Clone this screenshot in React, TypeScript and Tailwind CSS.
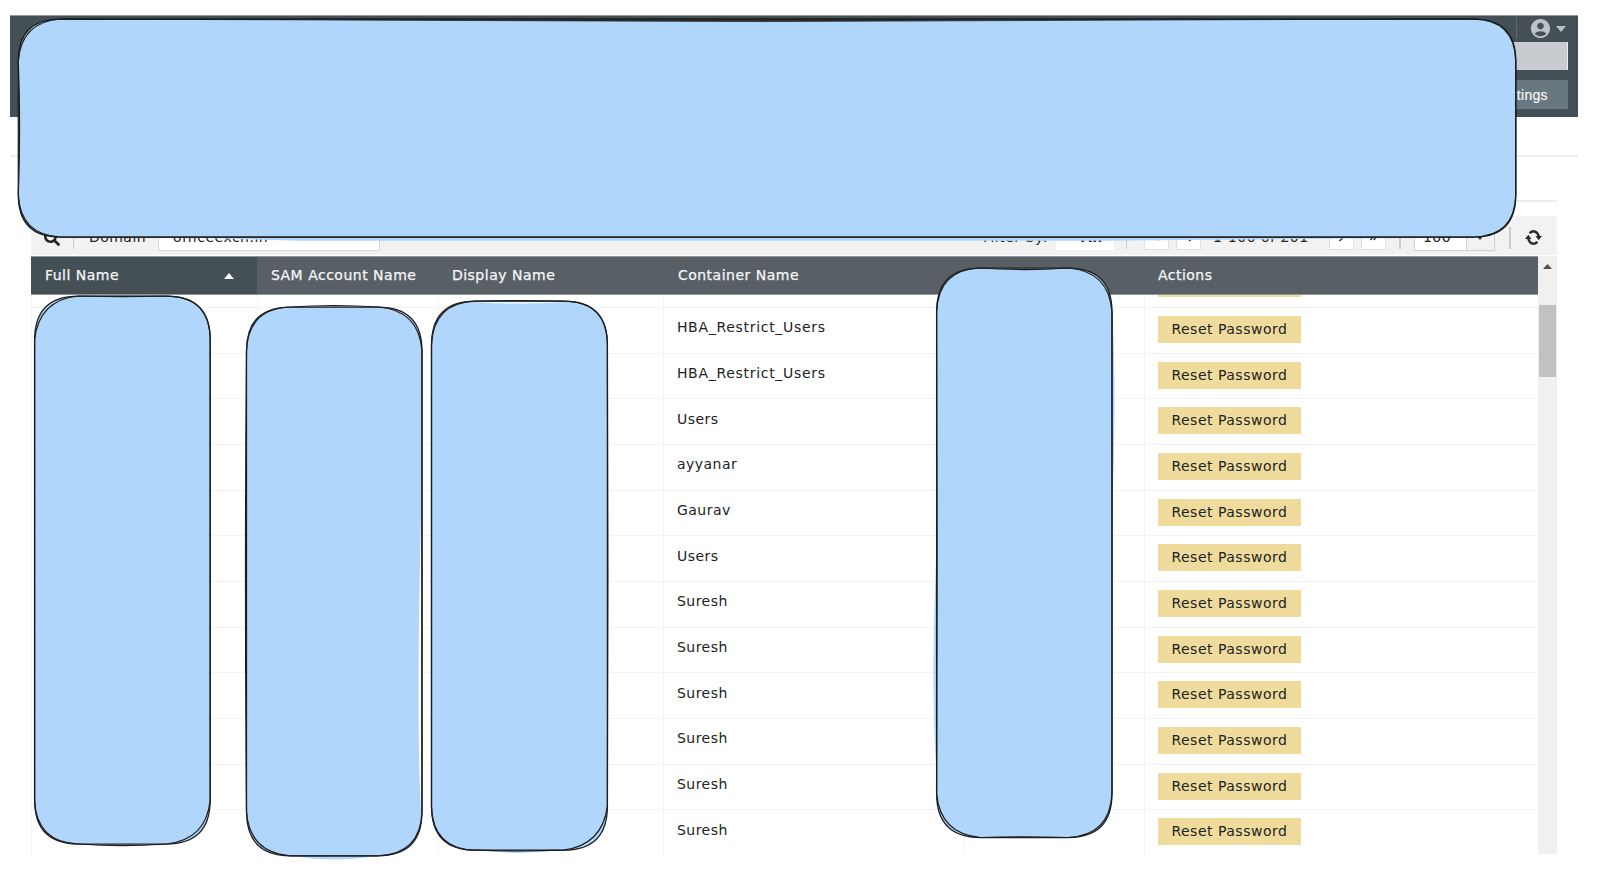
import { MdAccountCircle } from "react-icons/md";
import { FaSearch, FaChevronLeft, FaChevronRight, FaAngleDoubleLeft, FaAngleDoubleRight } from "react-icons/fa";

const containers = [
  "", "HBA_Restrict_Users", "HBA_Restrict_Users", "Users", "ayyanar", "Gaurav", "Users",
  "Suresh", "Suresh", "Suresh", "Suresh", "Suresh", "Suresh",
];

const columns = "grid grid-cols-[226px_181px_225px_301px_180px_1fr]";

// corners: inward shift of each corner's control point (tl, tr, br, bl)
// sides: outward bow of each side (top, right, bottom, left)
type Box = { x: number; y: number; r: number; b: number; c: number; corners: number[]; sides: number[] };

const masks: Box[] = [
  { x: 18.3, y: 19, r: 1515.8, b: 237, c: 42, corners: [3, 1, 1, 2], sides: [0, 0, 0, -2.5] },
  { x: 34.6, y: 296, r: 210.2, b: 844, c: 44, corners: [4, 0, 4, 1.5], sides: [-1, 0, 3, 0] },
  { x: 246.5, y: 307, r: 422, b: 855.8, c: 44, corners: [1.5, 3, 1.5, 3], sides: [3, 0, 0, 2] },
  { x: 431.5, y: 301.2, r: 607.4, b: 850.2, c: 44, corners: [1.5, 0, 5, 1], sides: [1, 1, 1.5, 0] },
  { x: 936.6, y: 268, r: 1112, b: 837.5, c: 44, corners: [1.5, 3, 2, 3.5], sides: [-3, 0, -1.5, -1] },
];

function outline({ x, y, r, b, c }: Box, [tl, tr, br, bl] = [0, 0, 0, 0], [t, rt, bt, lt] = [0, 0, 0, 0]) {
  const mx = (x + r) / 2;
  const my = (y + b) / 2;
  return `M${x + c} ${y}Q${mx} ${y - t} ${r - c} ${y}Q${r - tr} ${y + tr} ${r} ${y + c}Q${r + rt} ${my} ${r} ${b - c}Q${r - br} ${b - br} ${r - c} ${b}Q${mx} ${b + bt} ${x + c} ${b}Q${x + bl} ${b - bl} ${x} ${b - c}Q${x - lt} ${my} ${x} ${y + c}Q${x + tl} ${y + tl} ${x + c} ${y}Z`;
}

function Masks() {
  return (
    <svg className="pointer-events-none absolute inset-0" width="1623" height="873" fill="none">
      <path d="M130 236L300 240.700H1100L1400 238V236ZM290 855Q334 864 380 855ZM480 850Q520 856 556 850ZM1112 310Q1117 380 1112 520ZM937 540Q930 690 937 780ZM246 400Q244 620 247 760Z" fill="#b0d6fb" />
      {masks.map((m, i) => (
        <g key={i} stroke="#1e1e1e" strokeWidth="1.25">
          <path d={outline(m)} fill="#b0d6fb" />
          <path d={outline(m, m.corners, m.sides)} />
        </g>
      ))}
      <path d="M60 19L1040 19.500 1478 18.800 760 21.600Z" fill="#2b3033" stroke="#1e1e1e" strokeWidth=".7" />
      <path d="M421 520Q416 720 421 812Z" fill="#fff" />
      <path d="M475 302.200Q520 305 565 302.200Z" fill="#fff" />
    </svg>
  );
}

const pageButton = "flex h-[25px] w-[25px] items-center justify-center border border-[#e0e0e0] bg-white text-[9px]";

function Toolbar() {
  return (
    <div className="flex h-[39px] items-center bg-[#f2f2f2] pt-[4px] text-[14px] tracking-[0.5px] text-[#222]">
      <FaSearch className="ml-[13px] h-4 w-4" />
      <span className="ml-[13px] h-[22px] w-px bg-[#ccc]" />
      <span className="ml-[15px] w-[57px]">Domain</span>
      <div className="ml-[12px] flex h-[27px] w-[222px] items-center justify-between border border-[#d8d8d8] bg-white px-[14px]">
        <span>officeexch.in</span>
      </div>
      <span className="ml-[603px] whitespace-nowrap">Filter by:</span>
      <span className="ml-[8px] flex h-[25px] w-[58px] items-center gap-3 bg-white px-[11px] font-bold">
        <FaChevronLeft className="h-2 w-2" />All
      </span>
      <span className="ml-[12px] h-[22px] w-px bg-[#ccc]" />
      <span className={`ml-[17px] ${pageButton}`}><FaAngleDoubleLeft /></span>
      <span className={`ml-[7px] ${pageButton}`}><FaChevronLeft /></span>
      <span className="ml-[12px] w-[98px] whitespace-nowrap">1-100 of 201</span>
      <span className={`ml-[18px] ${pageButton}`}><FaChevronRight /></span>
      <span className={`ml-[7px] ${pageButton}`}><FaAngleDoubleRight /></span>
      <span className="ml-[13px] h-[22px] w-[2px] bg-[#ccc]" />
      <div className="ml-[13px] flex h-[27px] w-[81px] items-center border border-[#d0d0d0] bg-white">
        <span className="w-[51px] pl-[8px]">100</span>
        <span className="flex h-full flex-1 items-center justify-center border-l border-[#d0d0d0] bg-[#f2f2f2]">
          <svg width="8" height="5"><path d="M0 0H8L4 5Z" fill="#333" /></svg>
        </span>
      </div>
      <span className="ml-[14px] h-[22px] w-[2px] bg-[#ccc]" />
      <svg className="ml-[14px]" width="17" height="17" viewBox="0 0 17 17" fill="none" stroke="#2b2b2b" strokeWidth="2.500">
        <path d="M4.600 4.200Q8.500 .2 12.300 4.200Q13.700 5.800 13.700 8M12.400 12.800Q8.500 16.800 4.700 12.800Q3.300 11.200 3.300 9" />
        <path d="M10.500 7H17L13.700 11.200ZM0 10H6.500L3.300 5.800Z" fill="#2b2b2b" stroke="none" />
      </svg>
    </div>
  );
}

const cell = "border-l border-[#f3f3f3] pl-[13px]";

export default function App() {
  return (
    <div className="relative h-[873px] w-[1623px] overflow-hidden bg-white pt-[15px] pl-[10.400px] font-['DejaVu_Sans',sans-serif]">
      <header className="flex h-[101.500px] w-[1567.500px] flex-col items-end border-t border-[#8d9699] bg-[#454f56] pr-[10px]">
        <div className="flex h-[26px] items-center pb-[2px]">
          <span className="h-[22px] w-px bg-[#606a70]" />
          <MdAccountCircle className="ml-[12px] h-[23px] w-[23px] text-[#bbc2c9]" />
          <svg className="ml-[4px] mr-[2px] mt-[2px]" width="10" height="6"><path d="M0 0H10L5 6Z" fill="#bbc2c9" /></svg>
        </div>
        <div className="h-[28px] w-[420px] border-r border-[#eee] bg-[#c8cbd0]" />
        <div className="mt-[10px] flex h-[29px] w-[93px] items-center justify-end bg-[#697780] pt-px pr-[20px] font-['Liberation_Sans',sans-serif] text-[14px] tracking-[0.3px] text-[#f5f5f5] [-webkit-text-stroke:0.2px_#f5f5f5]">
          Settings
        </div>
      </header>
      <div className="h-[40px] w-[1567.500px] border-b-2 border-[#ececec]" />
      <div className="ml-[20.500px] h-[45.500px] w-[1526px] border-b-2 border-[#ececec]" />
      <main className="mt-[14px] ml-[20.500px] w-[1526px]">
        <Toolbar />
        <div className="flex h-[599px] border-t border-white">
          <div className="flex w-[1507px] flex-col">
            <div className={`${columns} h-[39px] shrink-0 items-center border-y border-[#8d9699] bg-[#586066] text-[14px] tracking-[0.5px] text-[#f6f6f6] [-webkit-text-stroke:0.25px_#f6f6f6]`}>
              <div className="flex h-full items-center justify-between bg-[#454f56] pr-[23px] pl-[14px]">
                Full Name
                <svg width="10" height="6"><path d="M0 6H10L5 0Z" fill="#fff" /></svg>
              </div>
              <span className="pl-[14px]">SAM Account Name</span>
              <span className="pl-[14px]">Display Name</span>
              <span className="pl-[15px]">Container Name</span>
              <span />
              <span className="pl-[14px]">Actions</span>
            </div>
            <div className="min-h-0 flex-1 overflow-hidden">
              <div className="-mt-[32.700px]">
                {containers.map((name, i) => (
                  <div key={i} className={`${columns} h-[45.670px] border-b border-[#f3f3f3] text-[14px] tracking-[0.5px] text-[#222]`}>
                    <div className={cell} />
                    <div className={cell} />
                    <div className={cell} />
                    <div className={`${cell} pt-[9.500px] ${name.includes("_") ? "tracking-[0.7px]" : ""}`}>{name}</div>
                    <div className={cell} />
                    <div className={`${cell} pt-[8px]`}>
                      <button className="block h-[27px] w-[143px] bg-[#efdc9d] text-center whitespace-nowrap">{name && "Reset Password"}</button>
                    </div>
                  </div>
                ))}
              </div>
            </div>
          </div>
          <div className="flex flex-1 flex-col items-center bg-[#f0f0f0] pt-[8px]">
            <svg width="9" height="5"><path d="M0 5H9L4.500 0Z" fill="#505050" /></svg>
            <div className="mt-[36px] h-[72px] w-[17px] bg-[#c1c1c1]" />
          </div>
        </div>
      </main>
      <Masks />
    </div>
  );
}
